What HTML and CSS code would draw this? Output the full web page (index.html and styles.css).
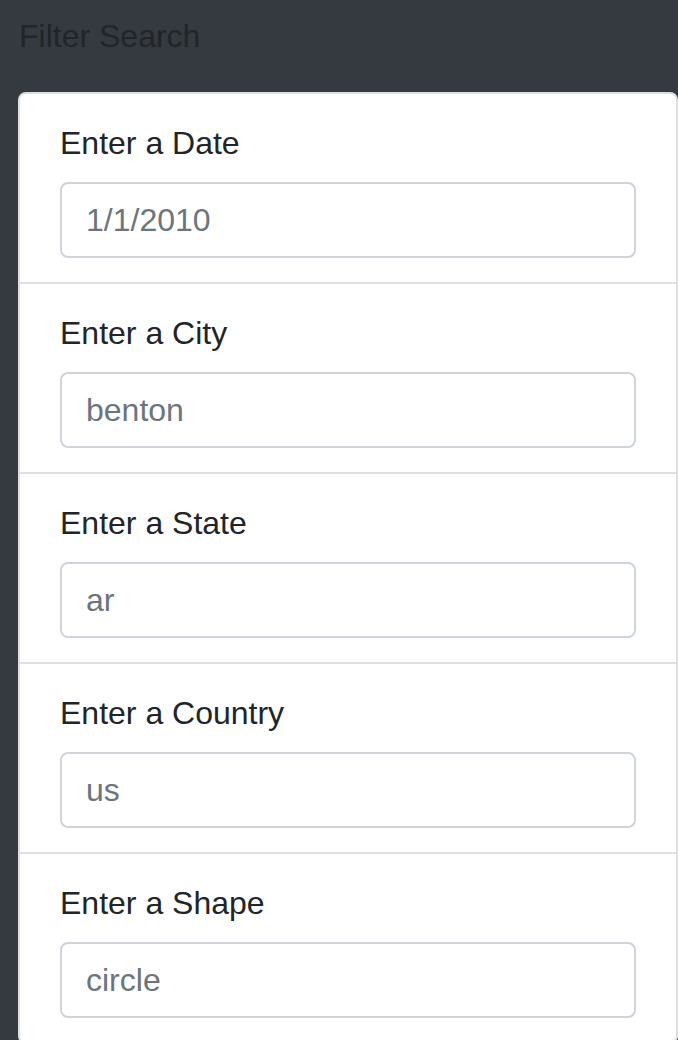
FILE: index.html
```html
<!DOCTYPE html>
<html lang="en">
<head>
<meta charset="utf-8">
<title>Filter Search</title>
<link rel="stylesheet" href="styles.css">
</head>
<body>
<div class="page">
  <h5 class="heading">Filter Search</h5>
  <ul class="filters">
    <li class="filter">
      <label class="label" for="date">Enter a Date</label>
      <input class="field" id="date" type="text" value="1/1/2010">
    </li>
    <li class="filter">
      <label class="label" for="city">Enter a City</label>
      <input class="field" id="city" type="text" value="benton">
    </li>
    <li class="filter">
      <label class="label" for="state">Enter a State</label>
      <input class="field" id="state" type="text" value="ar">
    </li>
    <li class="filter">
      <label class="label" for="country">Enter a Country</label>
      <input class="field" id="country" type="text" value="us">
    </li>
    <li class="filter">
      <label class="label" for="shape">Enter a Shape</label>
      <input class="field" id="shape" type="text" value="circle">
    </li>
  </ul>
</div>
</body>
</html>
```

FILE: styles.css
```css
* { box-sizing: border-box; }
html, body {
  margin: 0;
  padding: 0;
  background: #343a40;
  font-family: "Liberation Sans", Arial, sans-serif;
  color: #212529;
}
.page {
  padding: 12px 0 0 18px;
  overflow: hidden;
  height: 1040px;
}
.heading {
  margin: 0 0 32px 1px;
  font-size: 32px;
  line-height: 48px;
  font-weight: 400;
  color: #212529;
}
.filters {
  list-style: none;
  margin: 0;
  padding: 0;
  width: 660px;
  background: #fff;
  border: 2px solid #dfdfdf;
  border-radius: 8px;
}
.filter {
  padding: 24px 40px;
  border-top: 2px solid #dfdfdf;
  display: flex;
  flex-direction: column;
}
.filter:first-child { border-top: 0; }
.label {
  display: block;
  font-size: 32px;
  line-height: 48px;
  padding-top: 1px;
  margin-bottom: 15px;
  color: #212529;
}
.field {
  display: block;
  width: 100%;
  height: 76px;
  padding: 12px 24px;
  font-family: "Liberation Sans", Arial, sans-serif;
  font-size: 32px;
  line-height: 48px;
  color: #6c757d;
  background: #fff;
  border: 2px solid #ced4da;
  border-radius: 8px;
  outline: none;
}
```
